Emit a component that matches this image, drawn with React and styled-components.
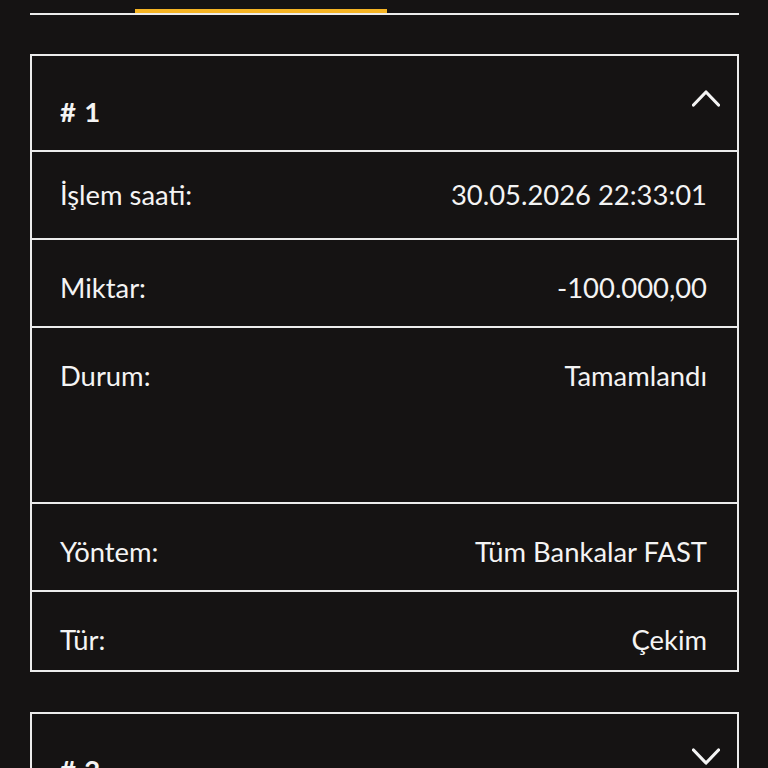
import React from "react";
import styled, { createGlobalStyle } from "styled-components";

const Global = createGlobalStyle`
  html, body {
    margin: 0;
    padding: 0;
    background: #151313;
  }
  body {
    font-family: Lato, "Noto Sans", sans-serif;
    color: #f4f4f4;
  }
`;

const Page = styled.div`
  padding: 0 29px 40px 30px;
  display: flex;
  flex-direction: column;
`;

const Tabs = styled.div`
  display: flex;
  height: 15px;
  box-sizing: border-box;
  border-bottom: 2px solid #ececec;
  margin-bottom: 39px;
`;

const Tab = styled.div`
  width: ${(p) => p.$w}px;
  display: flex;
  align-items: flex-end;
  &::after {
    content: "";
    display: block;
    width: 100%;
    height: 4px;
    background: ${(p) => (p.$active ? "#f5b424" : "transparent")};
  }
`;

const Cards = styled.div`
  display: flex;
  flex-direction: column;
  gap: 40px;
`;

const Card = styled.section`
  border: 2px solid #ececec;
  display: flex;
  flex-direction: column;
`;

const Header = styled.div`
  height: 94px;
  box-sizing: border-box;
  padding: 33px 17px 0 28px;
  display: flex;
  justify-content: space-between;
  align-items: flex-start;
`;

const Title = styled.h3`
  margin: 7px 0 0;
  font-size: 27.5px;
  line-height: 32px;
  font-weight: 700;
  letter-spacing: 0.8px;
`;

const Row = styled.div`
  height: ${(p) => p.$h}px;
  box-sizing: border-box;
  border-top: 2px solid #ececec;
  padding: ${(p) => p.$pt}px 30px 0 28px;
  display: flex;
  justify-content: space-between;
  align-items: flex-start;
  font-size: 27.4px;
  line-height: 32px;
`;

const Label = styled.span``;
const Value = styled.span`
  text-align: right;
`;

const Chevron = ({ up }) => (
  <svg width="28" height="18" viewBox="0 0 28 18" fill="none">
    <polyline
      points={up ? "1.5,16 14,3 26.5,16" : "1.5,3 14,16 26.5,3"}
      stroke="#f4f4f4"
      strokeWidth="3.2"
      strokeLinecap="round"
      strokeLinejoin="round"
    />
  </svg>
);

const rows = [
  { label: "İşlem saati:", value: "30.05.2026 22:33:01", h: 88, pt: 27 },
  { label: "Miktar:", value: "-100.000,00", h: 88, pt: 32 },
  { label: "Durum:", value: "Tamamlandı", h: 176, pt: 32 },
  { label: "Yöntem:", value: "Tüm Bankalar FAST", h: 88, pt: 32 },
  { label: "Tür:", value: "Çekim", h: 80, pt: 32 },
];

export default function App() {
  return (
    <>
      <Global />
      <Page>
        <Tabs>
          <Tab $w={105} />
          <Tab $w={252} $active />
          <Tab $w={252} />
        </Tabs>
        <Cards>
          <Card>
            <Header>
              <Title># 1</Title>
              <Chevron up />
            </Header>
            {rows.map((r) => (
              <Row key={r.label} $h={r.h} $pt={r.pt}>
                <Label>{r.label}</Label>
                <Value>{r.value}</Value>
              </Row>
            ))}
          </Card>
          <Card>
            <Header>
              <Title># 2</Title>
              <Chevron />
            </Header>
          </Card>
        </Cards>
      </Page>
    </>
  );
}
